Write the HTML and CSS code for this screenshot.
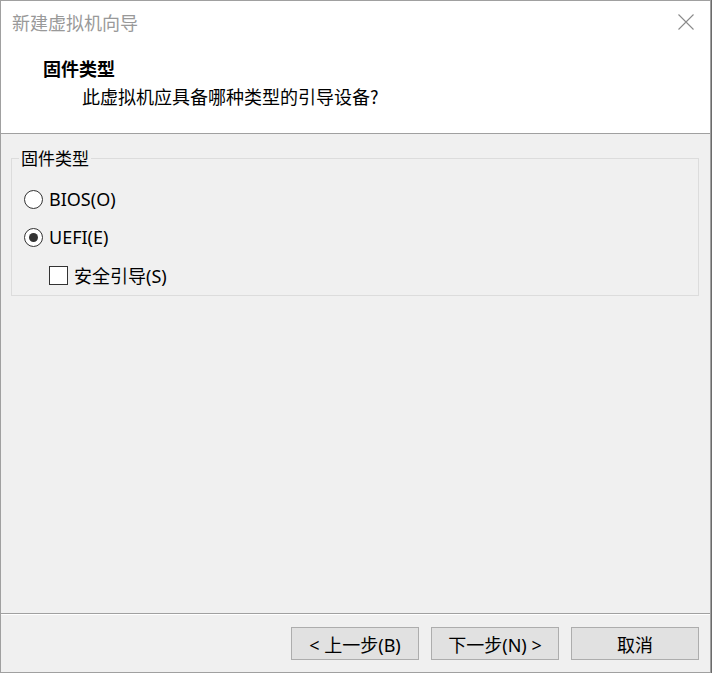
FILE: index.html
```html
<!DOCTYPE html>
<html lang="zh-CN">
<head>
<meta charset="utf-8">
<title>新建虚拟机向导</title>
<link rel="stylesheet" href="styles.css">
</head>
<body>
<div class="window">
  <div class="top">
    <div class="titlebar">
      <span class="title">新建虚拟机向导</span>
      <svg class="close" width="16" height="16" viewBox="0 0 16 16"><path d="M0.5 0.5 L15.5 15.5 M15.5 0.5 L0.5 15.5" stroke="#8a8a8a" stroke-width="1.1" fill="none"/></svg>
    </div>
    <div class="heading">固件类型</div>
    <div class="subtitle">此虚拟机应具备哪种类型的引导设备?</div>
  </div>
  <div class="content">
    <fieldset class="group">
      <legend class="legend">固件类型</legend>
      <div class="row first"><span class="radio"></span><span class="label">BIOS(O)</span></div>
      <div class="row"><span class="radio checked"></span><span class="label">UEFI(E)</span></div>
      <div class="row indent"><span class="check"></span><span class="label">安全引导(S)</span></div>
    </fieldset>
  </div>
  <div class="footer">
    <button class="btn">&lt; 上一步(B)</button>
    <button class="btn">下一步(N) &gt;</button>
    <button class="btn">取消</button>
  </div>
</div>
</body>
</html>
```
FILE: styles.css
```css
html, body {
  margin: 0;
  padding: 0;
  background: #6b6b6b;
}
body {
  font-family: "Noto Sans", "Noto Sans CJK SC", sans-serif;
  font-size: 18px;
  color: #000;
}
.window {
  width: 711px;
  height: 673px;
  box-sizing: border-box;
  border: 1px solid #a0a0a0;
  background: #f0f0f0;
  display: flex;
  flex-direction: column;
}
.top {
  height: 132px;
  background: #fff;
  border-bottom: 1px solid #a0a0a0;
  flex: none;
}
.titlebar {
  height: 42px;
  display: flex;
  align-items: center;
  justify-content: space-between;
  padding: 0 16px 0 11px;
}
.title {
  color: #999;
  font-family: "Noto Sans CJK SC", sans-serif;
  font-size: 18px;
}
.close {
  display: block;
}
.heading {
  font-family: "Noto Sans CJK SC", sans-serif;
  font-weight: bold;
  font-size: 18px;
  line-height: 24px;
  margin: 13px 0 0 42px;
}
.subtitle {
  font-family: "Noto Sans CJK SC", sans-serif;
  font-size: 18px;
  line-height: 24px;
  margin: 4px 0 0 81px;
}
.content {
  flex: 1;
  padding: 14px 11px 0 10px;
}
.group {
  margin: 0;
  padding: 0 12px 1px 12px;
  border: 1px solid #dcdcdc;
}
.legend {
  padding: 0 2px;
  margin-left: -5px;
  line-height: 20px;
  font-family: "Noto Sans CJK SC", sans-serif;
  font-size: 17px;
}
.row {
  height: 38px;
  display: flex;
  align-items: center;
}
.row.first {
  margin-top: 12px;
}
.radio {
  width: 19px;
  height: 19px;
  box-sizing: border-box;
  border: 1px solid #333;
  border-radius: 50%;
  background: #fff;
  display: flex;
  align-items: center;
  justify-content: center;
  flex: none;
}
.radio.checked::after {
  content: "";
  width: 9px;
  height: 9px;
  border-radius: 50%;
  background: #333;
}
.check {
  width: 19px;
  height: 19px;
  box-sizing: border-box;
  border: 1px solid #333;
  background: #fff;
  flex: none;
}
.indent {
  padding-left: 25px;
}
.label {
  margin-left: 6px;
}
.footer {
  flex: none;
  height: 59px;
  box-sizing: border-box;
  border-top: 1px solid #a0a0a0;
  box-shadow: inset 0 1px 0 #fff;
  padding: 13px 11px 0 0;
  display: flex;
  justify-content: flex-end;
  align-items: flex-start;
  gap: 12px;
}
.btn {
  width: 128px;
  height: 33px;
  box-sizing: border-box;
  border: 1px solid #adadad;
  background: #e1e1e1;
  font-family: inherit;
  font-size: 18px;
  color: #000;
  padding: 0;
  margin: 0;
}
```
